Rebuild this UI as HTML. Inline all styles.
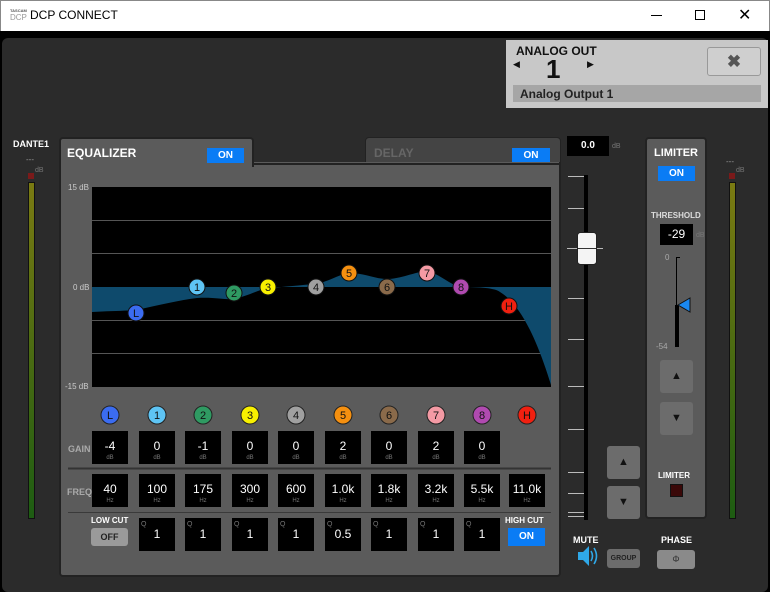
<!DOCTYPE html>
<html><head><meta charset="utf-8"><style>
*{box-sizing:border-box;margin:0;padding:0}
body{width:770px;height:592px;overflow:hidden;background:#000;font-family:"Liberation Sans",sans-serif;position:relative}
.a{position:absolute}
.t{color:#fff;font-weight:bold}
.box{position:absolute;background:#000;color:#fff;font-size:12px;text-align:center}
.on{position:absolute;background:#0a7cf5;color:#fff;font-weight:bold;font-size:10px;text-align:center;line-height:15px}
.btn{position:absolute;background:#6c6c6c;border-radius:3px;color:#111;font-size:11px;text-align:center}
.lbl{position:absolute;color:#aaa;font-size:9px;font-weight:bold}
.sm{position:absolute;color:#777;font-size:7px}
</style></head><body>
<div class="a" style="left:0;top:0;width:770px;height:31px;background:#fff;border:1px solid #888;border-bottom:none"></div>
<div class="a" style="left:10px;top:8px;font-size:4px;color:#555;font-weight:bold">TASCAM</div>
<div class="a" style="left:10px;top:13px;font-size:8px;color:#999">DCP</div>
<div class="a" style="left:30px;top:8px;font-size:12px;color:#000">DCP CONNECT</div>
<div class="a" style="left:651px;top:15px;width:11px;height:1px;background:#000"></div>
<div class="a" style="left:695px;top:10px;width:10px;height:10px;border:1px solid #000"></div>
<div class="a" style="left:738px;top:5px;font-size:16px;color:#000">✕</div>
<div class="a" style="left:2px;top:38px;width:766px;height:554px;background:#2b2b2b;border-radius:6px"></div>
<!-- analog out -->
<div class="a" style="left:506px;top:40px;width:262px;height:68px;background:#c8c8c8"></div>
<div class="a" style="left:516px;top:44px;font-size:12px;font-weight:bold;color:#111">ANALOG OUT</div>
<div class="a" style="left:513px;top:59px;font-size:9px;color:#111">◀</div>
<div class="a" style="left:587px;top:59px;font-size:9px;color:#111">▶</div>
<div class="a" style="left:546px;top:54px;font-size:26px;font-weight:bold;color:#111">1</div>
<div class="a" style="left:513px;top:85px;width:248px;height:17px;background:#a6a6a6;font-size:12px;font-weight:bold;color:#222;padding:2px 7px">Analog Output 1</div>
<div class="a" style="left:707px;top:47px;width:54px;height:29px;background:#cfcfcf;border:1px solid #999;border-radius:3px;text-align:center;font-size:17px;color:#555;line-height:27px;font-weight:bold">✖</div>
<!-- dante meters -->
<div class="a t" style="left:13px;top:139px;font-size:9px">DANTE1</div>
<div class="a" style="left:26px;top:155px;font-size:8px;color:#999">---</div>
<div class="sm" style="left:35px;top:167px">dB</div>
<div class="a" style="left:28px;top:173px;width:6px;height:6px;background:#7a1a1a"></div>
<div class="a" style="left:28px;top:182px;width:7px;height:337px;background:linear-gradient(#7a7a12,#1d5c12);border:1px solid #111"></div>
<div class="a" style="left:726px;top:157px;font-size:8px;color:#999">---</div>
<div class="sm" style="left:736px;top:167px">dB</div>
<div class="a" style="left:729px;top:173px;width:6px;height:6px;background:#7a1a1a"></div>
<div class="a" style="left:729px;top:182px;width:7px;height:337px;background:linear-gradient(#7a7a12,#1d5c12);border:1px solid #111"></div>
<!-- EQ tabs -->
<div class="a" style="left:365px;top:137px;width:196px;height:30px;background:#444;border:1px solid #222;border-radius:4px 4px 0 0"></div>
<div class="a" style="left:374px;top:146px;font-size:12px;font-weight:bold;color:#666">DELAY</div>
<div class="on" style="left:512px;top:148px;width:38px">ON</div>
<div class="a" style="left:59px;top:162px;width:502px;height:415px;background:#5b5b5b;border:2px solid #222;border-top:none;border-radius:0 0 4px 4px"></div>
<div class="a" style="left:59px;top:137px;width:195px;height:30px;background:#5b5b5b;border:2px solid #222;border-bottom:none;border-radius:4px 4px 0 0"></div>
<div class="a" style="left:252px;top:163px;width:309px;height:2px;background:#222"></div>
<div class="a t" style="left:67px;top:146px;font-size:12px">EQUALIZER</div>
<div class="on" style="left:207px;top:148px;width:37px">ON</div>
<div class="a" style="left:68px;top:183px;font-size:8px;color:#ccc">15 dB</div>
<div class="a" style="left:73px;top:283px;font-size:8px;color:#ccc">0 dB</div>
<div class="a" style="left:65px;top:382px;font-size:8px;color:#ccc">-15 dB</div>
<!-- limiter panel -->
<div class="a" style="left:645px;top:137px;width:62px;height:382px;background:#5b5b5b;border:2px solid #222;border-radius:4px"></div>
<svg class="a" style="left:0;top:0;z-index:1" width="770" height="592">
<rect x="92" y="187" width="459" height="200" fill="#000"/>
<g stroke="#555" stroke-width="1"><line x1="92" y1="220.5" x2="551" y2="220.5"/><line x1="92" y1="253.5" x2="551" y2="253.5"/><line x1="92" y1="320.5" x2="551" y2="320.5"/><line x1="92" y1="353.5" x2="551" y2="353.5"/></g>
<path d="M92 312 C110 311 125 311 136 310 C160 305 180 300 197 298 C215 297 225 300 234 299 C248 296 258 290 268 288 C285 287 300 285 316 284 C330 281 340 274 349 273 C365 273 375 279 387 279 C400 279 415 272 427 271 C440 274 450 285 461 287 C480 287 495 288 500 292 C510 298 520 310 530 330 C540 350 548 375 551 385 L551 287 L92 287 Z" fill="#0e4a6c"/>
<g font-family="Liberation Sans,sans-serif" font-size="11" text-anchor="middle">
<circle cx="136" cy="313" r="8" fill="#3b6cf0" stroke="#111"/><text x="136" y="317" fill="#111">L</text>
<circle cx="197" cy="287" r="8" fill="#5ec4f4" stroke="#111"/><text x="197" y="291" fill="#111">1</text>
<circle cx="234" cy="293" r="8" fill="#2f9a62" stroke="#111"/><text x="234" y="297" fill="#111">2</text>
<circle cx="268" cy="287" r="8" fill="#f8f000" stroke="#111"/><text x="268" y="291" fill="#111">3</text>
<circle cx="316" cy="287" r="8" fill="#a0a0a0" stroke="#111"/><text x="316" y="291" fill="#111">4</text>
<circle cx="349" cy="273" r="8" fill="#f59010" stroke="#111"/><text x="349" y="277" fill="#111">5</text>
<circle cx="387" cy="287" r="8" fill="#8a6a4a" stroke="#111"/><text x="387" y="291" fill="#111">6</text>
<circle cx="427" cy="273" r="8" fill="#f49aa4" stroke="#111"/><text x="427" y="277" fill="#111">7</text>
<circle cx="461" cy="287" r="8" fill="#b04ab0" stroke="#111"/><text x="461" y="291" fill="#111">8</text>
<circle cx="509" cy="306" r="8" fill="#f02010" stroke="#111"/><text x="509" y="310" fill="#111">H</text>
<circle cx="110" cy="415" r="9" fill="#3b6cf0" stroke="#222"/><text x="110" y="419" fill="#111">L</text>
<circle cx="157" cy="415" r="9" fill="#5ec4f4" stroke="#222"/><text x="157" y="419" fill="#111">1</text>
<circle cx="203" cy="415" r="9" fill="#2f9a62" stroke="#222"/><text x="203" y="419" fill="#111">2</text>
<circle cx="250" cy="415" r="9" fill="#f8f000" stroke="#222"/><text x="250" y="419" fill="#111">3</text>
<circle cx="296" cy="415" r="9" fill="#a0a0a0" stroke="#222"/><text x="296" y="419" fill="#111">4</text>
<circle cx="343" cy="415" r="9" fill="#f59010" stroke="#222"/><text x="343" y="419" fill="#111">5</text>
<circle cx="389" cy="415" r="9" fill="#8a6a4a" stroke="#222"/><text x="389" y="419" fill="#111">6</text>
<circle cx="436" cy="415" r="9" fill="#f49aa4" stroke="#222"/><text x="436" y="419" fill="#111">7</text>
<circle cx="482" cy="415" r="9" fill="#b04ab0" stroke="#222"/><text x="482" y="419" fill="#111">8</text>
<circle cx="527" cy="415" r="9" fill="#f02010" stroke="#222"/><text x="527" y="419" fill="#111">H</text>
</g>
<line x1="68" y1="468.5" x2="551" y2="468.5" stroke="#333" stroke-width="2"/>
<line x1="68" y1="512.5" x2="551" y2="512.5" stroke="#3a3a3a" stroke-width="1"/>
<!-- fader -->
<rect x="584" y="175" width="4" height="345" fill="#000"/>
<g stroke="#bbb" stroke-width="1">
<line x1="568" y1="176.5" x2="584" y2="176.5"/><line x1="568" y1="208.5" x2="584" y2="208.5"/><line x1="567" y1="248.5" x2="603" y2="248.5"/><line x1="568" y1="298.5" x2="584" y2="298.5"/><line x1="568" y1="339.5" x2="584" y2="339.5"/><line x1="568" y1="386.5" x2="584" y2="386.5"/><line x1="568" y1="429.5" x2="584" y2="429.5"/><line x1="568" y1="472.5" x2="584" y2="472.5"/><line x1="568" y1="493.5" x2="584" y2="493.5"/><line x1="568" y1="512.5" x2="584" y2="512.5"/><line x1="568" y1="516.5" x2="584" y2="516.5"/></g>
<rect x="577.5" y="232.5" width="19" height="32" rx="3" fill="#f4f4f4" stroke="#222"/>
<line x1="578" y1="248.5" x2="596" y2="248.5" stroke="#333"/>
<!-- limiter fader -->
<line x1="676.5" y1="257" x2="676.5" y2="347" stroke="#000"/>
<line x1="676" y1="257.5" x2="680" y2="257.5" stroke="#000"/>
<rect x="675" y="305" width="4" height="42" fill="#000"/>
<path d="M678 305 L690 298 L690 312 Z" fill="#1a88f0" stroke="#111"/>
<!-- speaker -->
<path d="M578 552 h5 l6 -6 v20 l-6 -6 h-5 z" fill="#2fa8e8"/>
<path d="M591 551 q3 5 0 10 M594 548 q5 8 0 16" stroke="#2fa8e8" stroke-width="1.6" fill="none"/>
</svg>
<!-- gain/freq/q -->
<div class="lbl" style="left:68px;top:444px">GAIN</div>
<div class="lbl" style="left:67px;top:487px">FREQ</div>
<div class="box" style="left:92px;top:431px;width:36px;height:33px;padding-top:8px">-4<div style="font-size:6px;color:#777;margin-top:2px">dB</div></div>
<div class="box" style="left:139px;top:431px;width:36px;height:33px;padding-top:8px">0<div style="font-size:6px;color:#777;margin-top:2px">dB</div></div>
<div class="box" style="left:185px;top:431px;width:36px;height:33px;padding-top:8px">-1<div style="font-size:6px;color:#777;margin-top:2px">dB</div></div>
<div class="box" style="left:232px;top:431px;width:36px;height:33px;padding-top:8px">0<div style="font-size:6px;color:#777;margin-top:2px">dB</div></div>
<div class="box" style="left:278px;top:431px;width:36px;height:33px;padding-top:8px">0<div style="font-size:6px;color:#777;margin-top:2px">dB</div></div>
<div class="box" style="left:325px;top:431px;width:36px;height:33px;padding-top:8px">2<div style="font-size:6px;color:#777;margin-top:2px">dB</div></div>
<div class="box" style="left:371px;top:431px;width:36px;height:33px;padding-top:8px">0<div style="font-size:6px;color:#777;margin-top:2px">dB</div></div>
<div class="box" style="left:418px;top:431px;width:36px;height:33px;padding-top:8px">2<div style="font-size:6px;color:#777;margin-top:2px">dB</div></div>
<div class="box" style="left:464px;top:431px;width:36px;height:33px;padding-top:8px">0<div style="font-size:6px;color:#777;margin-top:2px">dB</div></div>
<div class="box" style="left:92px;top:474px;width:36px;height:33px;padding-top:8px">40<div style="font-size:6px;color:#777;margin-top:2px">Hz</div></div>
<div class="box" style="left:139px;top:474px;width:36px;height:33px;padding-top:8px">100<div style="font-size:6px;color:#777;margin-top:2px">Hz</div></div>
<div class="box" style="left:185px;top:474px;width:36px;height:33px;padding-top:8px">175<div style="font-size:6px;color:#777;margin-top:2px">Hz</div></div>
<div class="box" style="left:232px;top:474px;width:36px;height:33px;padding-top:8px">300<div style="font-size:6px;color:#777;margin-top:2px">Hz</div></div>
<div class="box" style="left:278px;top:474px;width:36px;height:33px;padding-top:8px">600<div style="font-size:6px;color:#777;margin-top:2px">Hz</div></div>
<div class="box" style="left:325px;top:474px;width:36px;height:33px;padding-top:8px">1.0k<div style="font-size:6px;color:#777;margin-top:2px">Hz</div></div>
<div class="box" style="left:371px;top:474px;width:36px;height:33px;padding-top:8px">1.8k<div style="font-size:6px;color:#777;margin-top:2px">Hz</div></div>
<div class="box" style="left:418px;top:474px;width:36px;height:33px;padding-top:8px">3.2k<div style="font-size:6px;color:#777;margin-top:2px">Hz</div></div>
<div class="box" style="left:464px;top:474px;width:36px;height:33px;padding-top:8px">5.5k<div style="font-size:6px;color:#777;margin-top:2px">Hz</div></div>
<div class="box" style="left:509px;top:474px;width:36px;height:33px;padding-top:8px">11.0k<div style="font-size:6px;color:#777;margin-top:2px">Hz</div></div>
<div class="box" style="left:139px;top:518px;width:36px;height:33px;padding-top:9px">1<span class="sm" style="left:2px;top:3px">Q</span></div>
<div class="box" style="left:185px;top:518px;width:36px;height:33px;padding-top:9px">1<span class="sm" style="left:2px;top:3px">Q</span></div>
<div class="box" style="left:232px;top:518px;width:36px;height:33px;padding-top:9px">1<span class="sm" style="left:2px;top:3px">Q</span></div>
<div class="box" style="left:278px;top:518px;width:36px;height:33px;padding-top:9px">1<span class="sm" style="left:2px;top:3px">Q</span></div>
<div class="box" style="left:325px;top:518px;width:36px;height:33px;padding-top:9px">0.5<span class="sm" style="left:2px;top:3px">Q</span></div>
<div class="box" style="left:371px;top:518px;width:36px;height:33px;padding-top:9px">1<span class="sm" style="left:2px;top:3px">Q</span></div>
<div class="box" style="left:418px;top:518px;width:36px;height:33px;padding-top:9px">1<span class="sm" style="left:2px;top:3px">Q</span></div>
<div class="box" style="left:464px;top:518px;width:36px;height:33px;padding-top:9px">1<span class="sm" style="left:2px;top:3px">Q</span></div>
<div class="a t" style="left:91px;top:516px;font-size:8px">LOW CUT</div>
<div class="btn" style="left:91px;top:528px;width:37px;height:18px;background:#9a9a9a;font-weight:bold;font-size:9px;line-height:18px;color:#222">OFF</div>
<div class="a t" style="left:505px;top:516px;font-size:8px">HIGH CUT</div>
<div class="on" style="left:508px;top:528px;width:37px;height:18px;line-height:18px">ON</div>
<!-- fader value -->
<div class="box" style="left:567px;top:136px;width:42px;height:20px;line-height:20px;font-weight:bold;font-size:10px">0.0</div>
<div class="sm" style="left:612px;top:143px">dB</div>
<!-- limiter -->
<div class="a t" style="left:654px;top:147px;font-size:11px">LIMITER</div>
<div class="on" style="left:658px;top:166px;width:37px">ON</div>
<div class="a" style="left:651px;top:211px;font-size:8px;font-weight:bold;color:#ddd">THRESHOLD</div>
<div class="box" style="left:660px;top:224px;width:33px;height:21px;line-height:21px">-29</div>
<div class="sm" style="left:696px;top:232px">dB</div>
<div class="a" style="left:665px;top:253px;font-size:8px;color:#aaa">0</div>
<div class="a" style="left:656px;top:342px;font-size:8px;color:#aaa">-54</div>
<div class="btn" style="left:660px;top:360px;width:33px;height:33px;line-height:33px">▲</div>
<div class="btn" style="left:660px;top:402px;width:33px;height:33px;line-height:33px">▼</div>
<div class="a t" style="left:658px;top:471px;font-size:8px">LIMITER</div>
<div class="a" style="left:670px;top:484px;width:13px;height:13px;background:#3a0808;border:1px solid #111"></div>
<div class="btn" style="left:607px;top:446px;width:33px;height:33px;line-height:33px">▲</div>
<div class="btn" style="left:607px;top:486px;width:33px;height:33px;line-height:33px">▼</div>
<div class="a t" style="left:573px;top:535px;font-size:9px">MUTE</div>
<div class="btn" style="left:607px;top:549px;width:33px;height:19px;line-height:19px;font-size:7px;font-weight:bold;color:#222">GROUP</div>
<div class="a t" style="left:661px;top:535px;font-size:9px">PHASE</div>
<div class="btn" style="left:657px;top:550px;width:38px;height:19px;line-height:19px;font-size:9px;background:#8a8a8a;color:#333">Φ</div>
</body></html>
